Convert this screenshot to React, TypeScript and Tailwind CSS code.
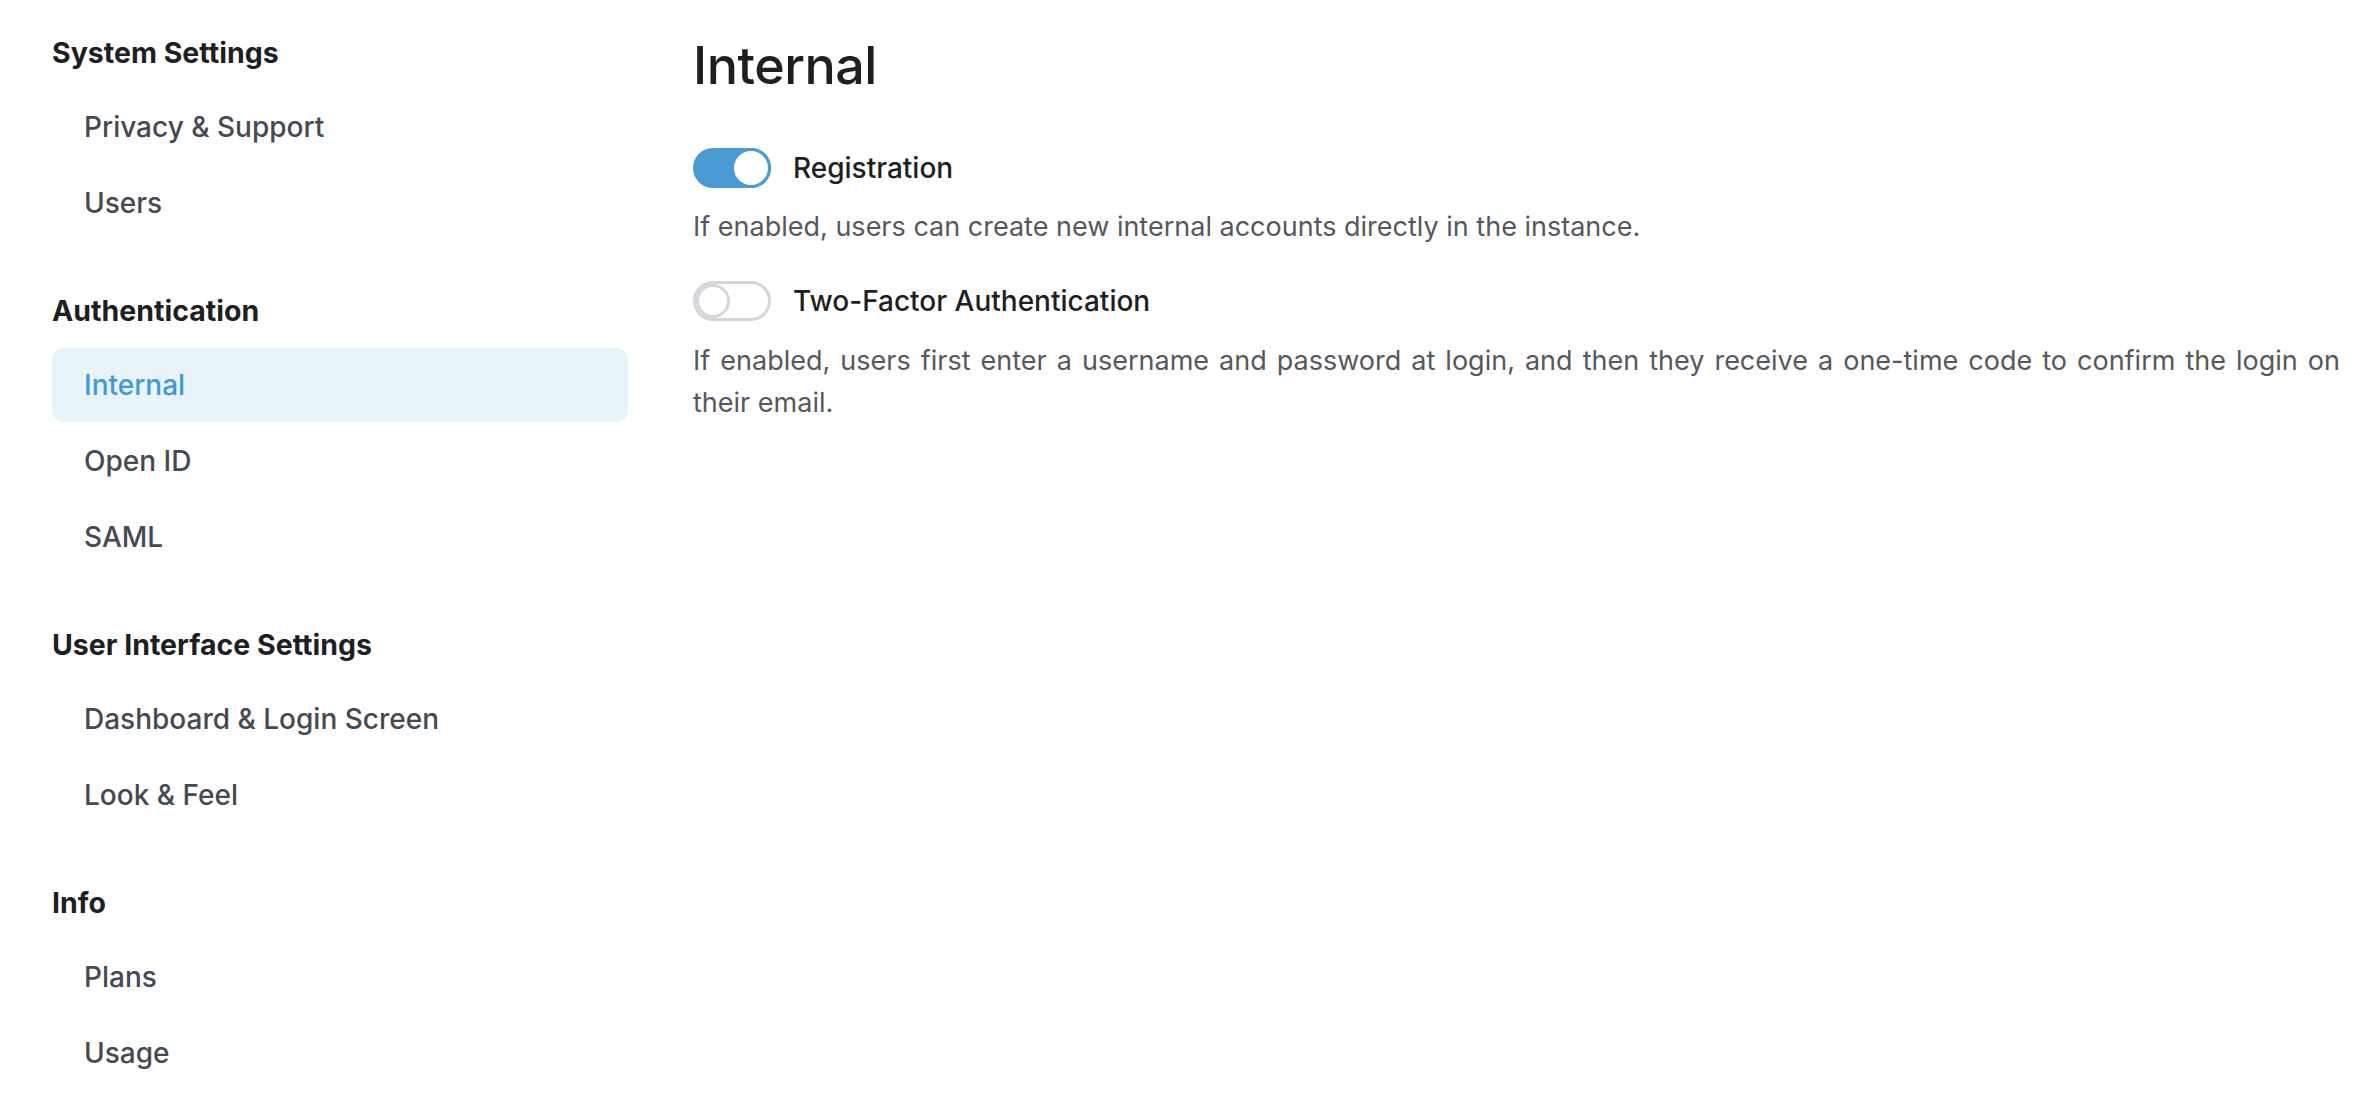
import React from "react";

type Item = { label: string; active?: boolean };
type Section = { title: string; items: Item[] };

const sections: Section[] = [
  { title: "System Settings", items: [{ label: "Privacy & Support" }, { label: "Users" }] },
  {
    title: "Authentication",
    items: [{ label: "Internal", active: true }, { label: "Open ID" }, { label: "SAML" }],
  },
  {
    title: "User Interface Settings",
    items: [{ label: "Dashboard & Login Screen" }, { label: "Look & Feel" }],
  },
  { title: "Info", items: [{ label: "Plans" }, { label: "Usage" }] },
];

function Toggle({ on }: { on: boolean }) {
  return on ? (
    <div className="flex h-[40px] w-[78px] shrink-0 items-center justify-end rounded-full bg-[#4a9ad4]">
      <div className="h-[40px] w-[40px] rounded-full border-[3px] border-[#4a9ad4] bg-white" />
    </div>
  ) : (
    <div className="flex h-[40px] w-[78px] shrink-0 items-center justify-start rounded-full border-[3px] border-[#d3d6db] bg-white">
      <div className="h-[34px] w-[34px] rounded-full border-[3px] border-[#d3d6db] bg-white" />
    </div>
  );
}

export default function App() {
  return (
    <div
      className="flex min-h-[1100px] w-full bg-white pl-[52px] pr-[32px] pt-[33px]"
      style={{ fontFamily: "Inter, 'Noto Sans', sans-serif" }}
    >
      <nav className="flex w-[576px] shrink-0 flex-col gap-[51px]">
        {sections.map((s) => (
          <div key={s.title}>
            <div className="h-[40px] text-[28.5px] leading-[40px] font-bold text-[#1d1f23]">
              {s.title}
            </div>
            <div className="mt-[17px] flex flex-col gap-[2px]">
              {s.items.map((it) => (
                <div
                  key={it.label}
                  className={
                    it.active
                      ? "flex h-[74px] items-center rounded-[12px] bg-[#e9f4fa] pl-[32px] text-[28px] font-medium text-[#3e9ad8]"
                      : "flex h-[74px] items-center rounded-[12px] pl-[32px] text-[28px] font-medium text-[#454a52]"
                  }
                >
                  {it.label}
                </div>
              ))}
            </div>
          </div>
        ))}
      </nav>
      <main className="ml-[65px] flex-1">
        <h1 className="h-[65px] text-[52px] leading-[65px] font-medium text-[#1d1f23] tracking-[-0.5px]">
          Internal
        </h1>
        <div className="mt-[49px] flex items-center gap-[22px]">
          <Toggle on={true} />
          <span className="text-[28px] font-medium text-[#1d1f23]">Registration</span>
        </div>
        <p className="mt-[17px] text-[27px] leading-[42px] text-[#56585e]">
          If enabled, users can create new internal accounts directly in the instance.
        </p>
        <div className="mt-[32px] flex items-center gap-[22px]">
          <Toggle on={false} />
          <span className="text-[28px] font-medium text-[#1d1f23]">Two-Factor Authentication</span>
        </div>
        <p className="mt-[18px] text-justify text-[27px] leading-[42px] text-[#56585e]">
          If enabled, users first enter a username and password at login, and then they receive a one-time code
          to confirm the login on their email.
        </p>
      </main>
    </div>
  );
}
